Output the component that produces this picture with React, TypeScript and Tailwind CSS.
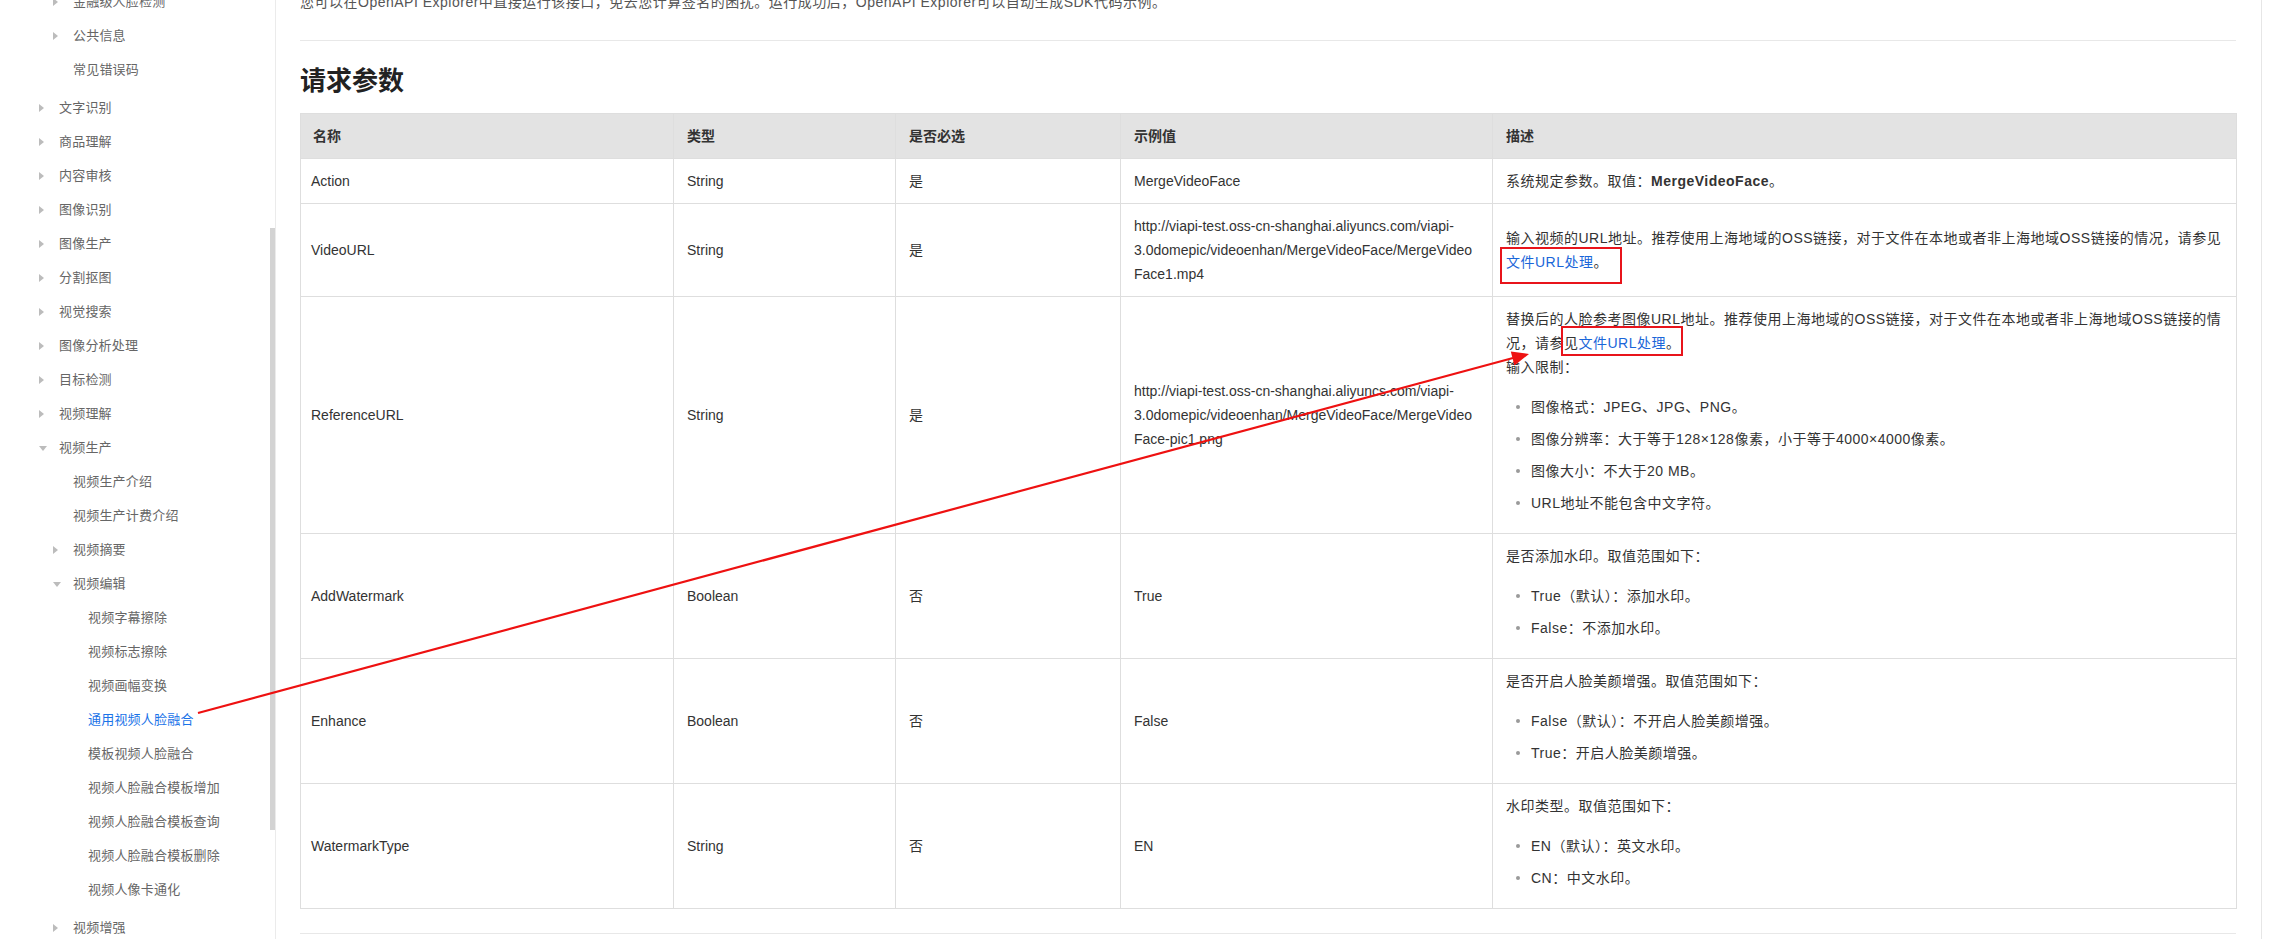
import React from "react";

type NavItem = {
  label: string;
  level: 1 | 2 | 3;
  arrow?: "right" | "down";
  active?: boolean;
  gapAfter?: boolean;
};

const nav: NavItem[] = [
  { label: "金融级人脸检测", level: 2, arrow: "right" },
  { label: "公共信息", level: 2, arrow: "right" },
  { label: "常见错误码", level: 2, gapAfter: true },
  { label: "文字识别", level: 1, arrow: "right" },
  { label: "商品理解", level: 1, arrow: "right" },
  { label: "内容审核", level: 1, arrow: "right" },
  { label: "图像识别", level: 1, arrow: "right" },
  { label: "图像生产", level: 1, arrow: "right" },
  { label: "分割抠图", level: 1, arrow: "right" },
  { label: "视觉搜索", level: 1, arrow: "right" },
  { label: "图像分析处理", level: 1, arrow: "right" },
  { label: "目标检测", level: 1, arrow: "right" },
  { label: "视频理解", level: 1, arrow: "right" },
  { label: "视频生产", level: 1, arrow: "down" },
  { label: "视频生产介绍", level: 2 },
  { label: "视频生产计费介绍", level: 2 },
  { label: "视频摘要", level: 2, arrow: "right" },
  { label: "视频编辑", level: 2, arrow: "down" },
  { label: "视频字幕擦除", level: 3 },
  { label: "视频标志擦除", level: 3 },
  { label: "视频画幅变换", level: 3 },
  { label: "通用视频人脸融合", level: 3, active: true },
  { label: "模板视频人脸融合", level: 3 },
  { label: "视频人脸融合模板增加", level: 3 },
  { label: "视频人脸融合模板查询", level: 3 },
  { label: "视频人脸融合模板删除", level: 3 },
  { label: "视频人像卡通化", level: 3, gapAfter: true },
  { label: "视频增强", level: 2, arrow: "right" },
];

function Caret({ dir }: { dir: "right" | "down" }) {
  if (dir === "down") {
    return (
      <svg width="8" height="5" viewBox="0 0 8 5" className="mt-[1px]">
        <path d="M0 0h8L4 5z" fill="#bcbcbc" />
      </svg>
    );
  }
  return (
    <svg width="5" height="8" viewBox="0 0 5 8">
      <path d="M0 0l5 4-5 4z" fill="#bcbcbc" />
    </svg>
  );
}

function Sidebar() {
  return (
    <aside className="relative w-[276px] shrink-0 border-r border-[#ebebeb] bg-white">
      <ul className="-mt-[15px] text-[13px] tracking-[0.2px]">
        {nav.map((item) => (
          <li
            key={item.label}
            className={
              "flex h-[34px] items-center " +
              (item.level === 1 ? "pl-[39px] " : item.level === 2 ? "pl-[53px] " : "pl-[68px] ") +
              (item.gapAfter ? "mb-[4px]" : "")
            }
          >
            <span className="flex w-[20px] items-center">
              {item.arrow ? <Caret dir={item.arrow} /> : null}
            </span>
            <span className={item.active ? "text-[#1a73e8]" : "text-[#666]"}>{item.label}</span>
          </li>
        ))}
      </ul>
      <div className="absolute right-0 top-[228px] h-[602px] w-[5px] bg-[#d3d3d3]" />
    </aside>
  );
}

function Bullets({ items }: { items: string[] }) {
  return (
    <ul className="mt-[16px]">
      {items.map((t) => (
        <li key={t} className="mb-[8px] flex items-center">
          <span className="ml-[10px] mr-[11px] h-[4px] w-[4px] rounded-full bg-[#9a9a9a]" />
          <span>{t}</span>
        </li>
      ))}
    </ul>
  );
}

function Link({ children }: { children: React.ReactNode }) {
  return <span className="text-[#1a66d9]">{children}</span>;
}

type Row = {
  name: string;
  type: string;
  req: string;
  example: string;
  height: string;
  desc: React.ReactNode;
};

const rows: Row[] = [
  {
    name: "Action",
    type: "String",
    req: "是",
    example: "MergeVideoFace",
    height: "h-[45px]",
    desc: (
      <p>
        系统规定参数。取值：<b className="font-bold">MergeVideoFace</b>。
      </p>
    ),
  },
  {
    name: "VideoURL",
    type: "String",
    req: "是",
    example:
      "http://viapi-test.oss-cn-shanghai.aliyuncs.com/viapi-3.0domepic/videoenhan/MergeVideoFace/MergeVideoFace1.mp4",
    height: "h-[93px]",
    desc: (
      <p>
        输入视频的URL地址。推荐使用上海地域的OSS链接，对于文件在本地或者非上海地域OSS链接的情况，请参见
        <span className="relative inline-block">
          <Link>文件URL处理</Link>。
          <span className="absolute left-[-6px] top-[-3px] h-[37px] w-[122px] border-2 border-[#e8141b]" />
        </span>
      </p>
    ),
  },
  {
    name: "ReferenceURL",
    type: "String",
    req: "是",
    example:
      "http://viapi-test.oss-cn-shanghai.aliyuncs.com/viapi-3.0domepic/videoenhan/MergeVideoFace/MergeVideoFace-pic1.png",
    height: "h-[237px]",
    desc: (
      <>
        <p>
          替换后的人脸参考图像URL地址。推荐使用上海地域的OSS链接，对于文件在本地或者非上海地域OSS链接的情况，请参
          <span className="relative inline-block">
            见<Link>文件URL处理</Link>。
            <span className="absolute left-[-3px] top-[-5px] h-[30px] w-[122px] border-2 border-[#e8141b]" />
          </span>
        </p>
        <p>输入限制：</p>
        <Bullets
          items={[
            "图像格式：JPEG、JPG、PNG。",
            "图像分辨率：大于等于128×128像素，小于等于4000×4000像素。",
            "图像大小：不大于20 MB。",
            "URL地址不能包含中文字符。",
          ]}
        />
      </>
    ),
  },
  {
    name: "AddWatermark",
    type: "Boolean",
    req: "否",
    example: "True",
    height: "h-[125px]",
    desc: (
      <>
        <p>是否添加水印。取值范围如下：</p>
        <Bullets items={["True（默认）：添加水印。", "False：不添加水印。"]} />
      </>
    ),
  },
  {
    name: "Enhance",
    type: "Boolean",
    req: "否",
    example: "False",
    height: "h-[125px]",
    desc: (
      <>
        <p>是否开启人脸美颜增强。取值范围如下：</p>
        <Bullets items={["False（默认）：不开启人脸美颜增强。", "True：开启人脸美颜增强。"]} />
      </>
    ),
  },
  {
    name: "WatermarkType",
    type: "String",
    req: "否",
    example: "EN",
    height: "h-[125px]",
    desc: (
      <>
        <p>水印类型。取值范围如下：</p>
        <Bullets items={["EN（默认）：英文水印。", "CN：中文水印。"]} />
      </>
    ),
  },
];

function ParamTable() {
  const th = "border border-[#dedede] px-[13px] text-left align-middle font-bold text-[#333]";
  const td = "border border-[#dedede] px-[13px] align-middle text-[#333]";
  return (
    <table className="mt-[14px] w-[1936px] table-fixed border-collapse text-[14px] leading-[24px]">
      <colgroup>
        <col className="w-[373px]" />
        <col className="w-[222px]" />
        <col className="w-[225px]" />
        <col className="w-[372px]" />
        <col className="w-[744px]" />
      </colgroup>
      <thead>
        <tr className="h-[45px] bg-[#e3e3e3]">
          <th className={th + " !px-[12px]"}>名称</th>
          <th className={th}>类型</th>
          <th className={th}>是否必选</th>
          <th className={th}>示例值</th>
          <th className={th}>描述</th>
        </tr>
      </thead>
      <tbody>
        {rows.map((r) => (
          <tr key={r.name} className={r.height}>
            <td className={td + " !px-[10px]"}>{r.name}</td>
            <td className={td}>{r.type}</td>
            <td className={td}>{r.req}</td>
            <td className={td + " !pr-[16px] break-words"}>{r.example}</td>
            <td className={td + " py-[10px] tracking-[0.5px]"}>{r.desc}</td>
          </tr>
        ))}
      </tbody>
    </table>
  );
}

export default function App() {
  return (
    <div className="relative flex h-[939px] w-[2280px] overflow-hidden bg-white font-['Liberation_Sans','Noto_Sans_CJK_SC',sans-serif]">
      <Sidebar />
      <main className="w-[1986px] shrink-0 border-r border-[#e6e6e6] pl-[24px] pr-[25px]">
        <p className="-mt-[10px] text-[14px] leading-[24px] tracking-[0.5px] text-[#555]">
          您可以在OpenAPI Explorer中直接运行该接口，免去您计算签名的困扰。运行成功后，OpenAPI Explorer可以自动生成SDK代码示例。
        </p>
        <div className="mt-[26px] h-px bg-[#e8e8e8]" />
        <h2 className="mt-[22px] text-[26px] font-bold leading-[36px] text-[#222]">请求参数</h2>
        <ParamTable />
        <div className="mt-[24px] h-px bg-[#e8e8e8]" />
      </main>
      <svg
        className="pointer-events-none absolute left-0 top-0"
        width="2280"
        height="939"
        viewBox="0 0 2280 939"
      >
        <line x1="198" y1="713" x2="1513" y2="358" stroke="#ee1111" strokeWidth="2.2" />
        <path d="M1529 354 L1514.4 365.4 L1510.8 351.5 Z" fill="#ee1111" />
      </svg>
    </div>
  );
}
